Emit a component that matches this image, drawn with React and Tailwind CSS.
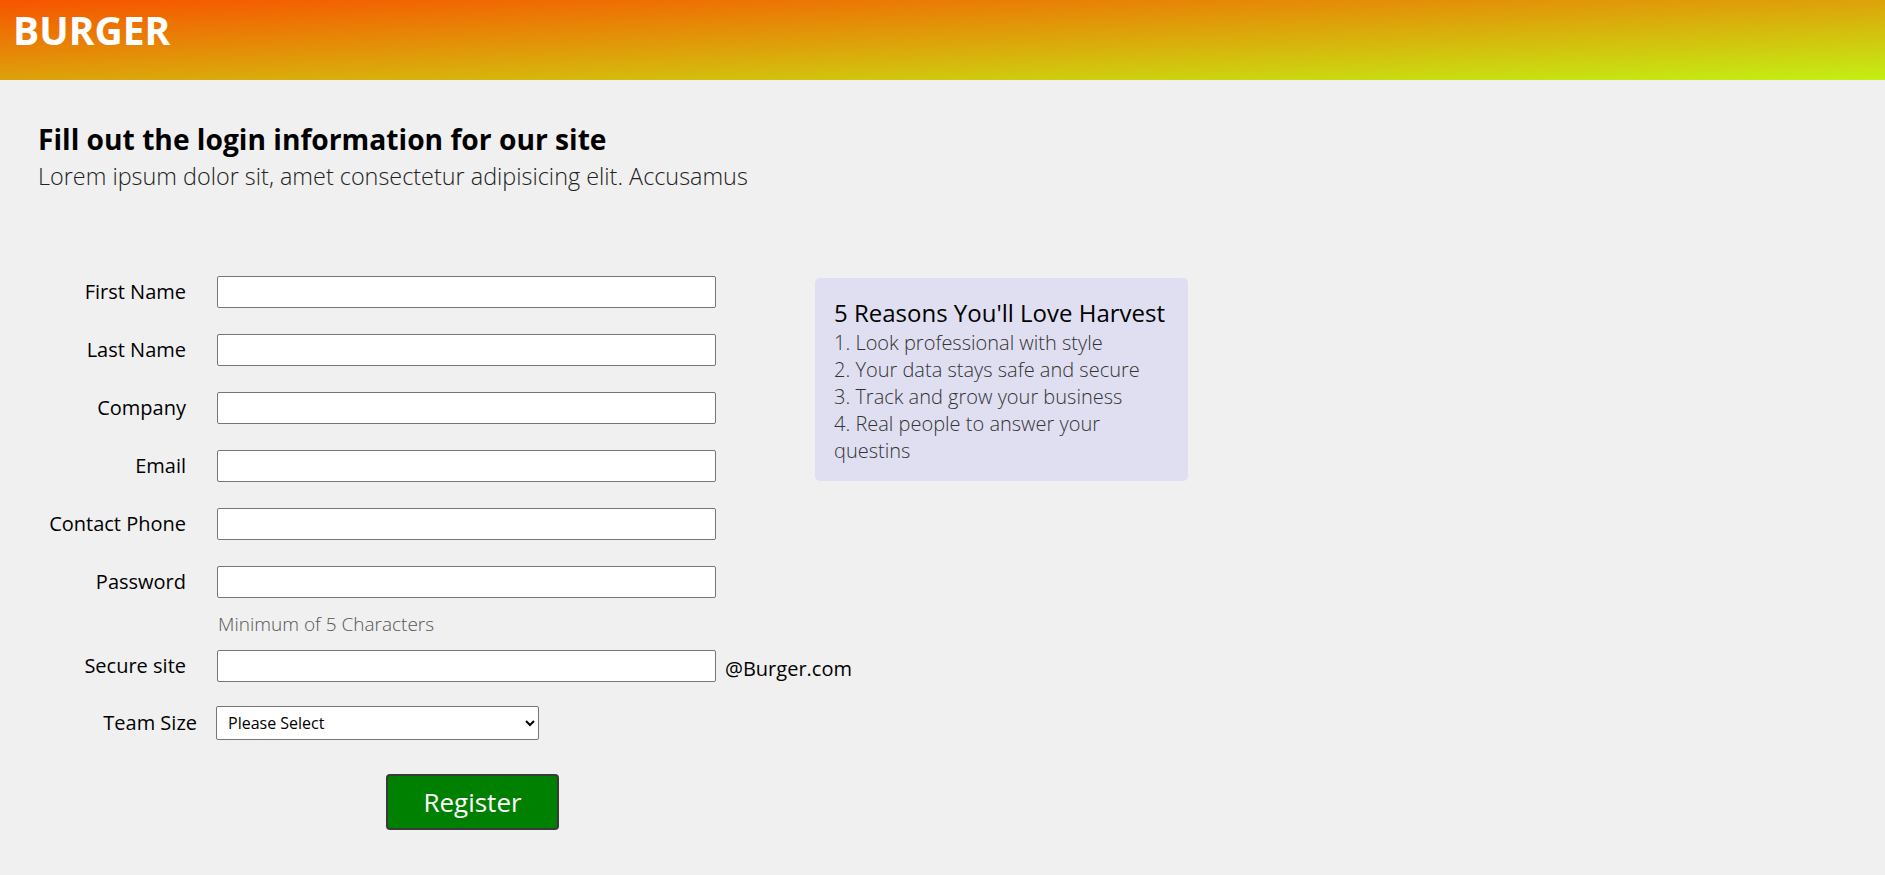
const fields = ['First Name', 'Last Name', 'Company', 'Email', 'Contact Phone', 'Password']

const reasons = [
    '1. Look professional with style',
    '2. Your data stays safe and secure',
    '3. Track and grow your business',
    '4. Real people to answer your questins',
]

function FieldRow({ label, children }) {
    return (
        <div className="flex items-center">
            <label className="w-[148px] shrink-0 text-right text-[20px] text-black">{label}</label>
            <div className="ml-[31px] flex shrink-0 items-center">{children}</div>
        </div>
    )
}

function App() {
    return (
        <div
            className="min-h-[875px] bg-[#f0f0f0] pb-10"
            style={{ fontFamily: '"Open Sans", "Liberation Sans", sans-serif' }}
        >
            <header className="h-[80px] bg-[linear-gradient(to_bottom_right,#f75400,#c3f014)] px-[13px] pt-[10px]">
                <h1 className="text-[39px] leading-none font-bold text-white">BURGER</h1>
            </header>

            <main className="px-[38px] pt-[40px]">
                <h2 className="text-[28.2px] leading-[38px] font-bold text-black">
                    Fill out the login information for our site
                </h2>
                <p className="mt-[3px] text-[23.4px] leading-[31px] font-light text-[#222]">
                    Lorem ipsum dolor sit, amet consectetur adipisicing elit. Accusamus
                </p>

                <div className="mt-[84px] flex items-start">
                    <form className="flex w-[777px] shrink-0 flex-col">
                        <div className="flex flex-col gap-[26px]">
                            {fields.map((f) => (
                                <FieldRow key={f} label={f}>
                                    <input
                                        type={f === 'Password' ? 'password' : 'text'}
                                        className="h-[32px] w-[499px] rounded-[2px] border border-[#767676] bg-white px-2"
                                    />
                                </FieldRow>
                            ))}
                        </div>
                        <p className="mt-[13px] ml-[180px] text-[19px] leading-[26px] font-light text-[#555]">
                            Minimum of 5 Characters
                        </p>
                        <div className="mt-[11px]">
                            <FieldRow label="Secure site">
                                <input
                                    type="text"
                                    className="h-[32px] w-[499px] rounded-[2px] border border-[#767676] bg-white px-2"
                                />
                                <span className="ml-[9px] pt-[6px] text-[20px] whitespace-nowrap text-black">
                                    @Burger.com
                                </span>
                            </FieldRow>
                        </div>
                        <div className="mt-[22px] flex items-center">
                            <label className="w-[159px] shrink-0 text-right text-[20px] text-black">Team Size</label>
                            <select className="ml-[19px] h-[34px] w-[323px] rounded-[2px] border border-[#767676] bg-white pl-[7px] text-[16px] text-black">
                                <option>Please Select</option>
                                <option>1-10</option>
                                <option>11-50</option>
                                <option>51+</option>
                            </select>
                        </div>
                        <button
                            type="button"
                            className="mt-[34px] ml-[348px] h-[56px] w-[173px] rounded-[4px] border-2 border-[#3a3a3a] bg-[#008000] text-[26px] text-white"
                        >
                            Register
                        </button>
                    </form>

                    <aside className="mt-[2px] w-[373px] rounded-[5px] bg-[#dfdff1] px-[19px] pt-[18px] pb-[17px]">
                        <h3 className="text-[24px] leading-[33px] text-black">5 Reasons You'll Love Harvest</h3>
                        <ul className="text-[20px] leading-[27px] font-light text-[#333]">
                            {reasons.map((r) => (
                                <li key={r}>{r}</li>
                            ))}
                        </ul>
                    </aside>
                </div>
            </main>
        </div>
    )
}

export default App
